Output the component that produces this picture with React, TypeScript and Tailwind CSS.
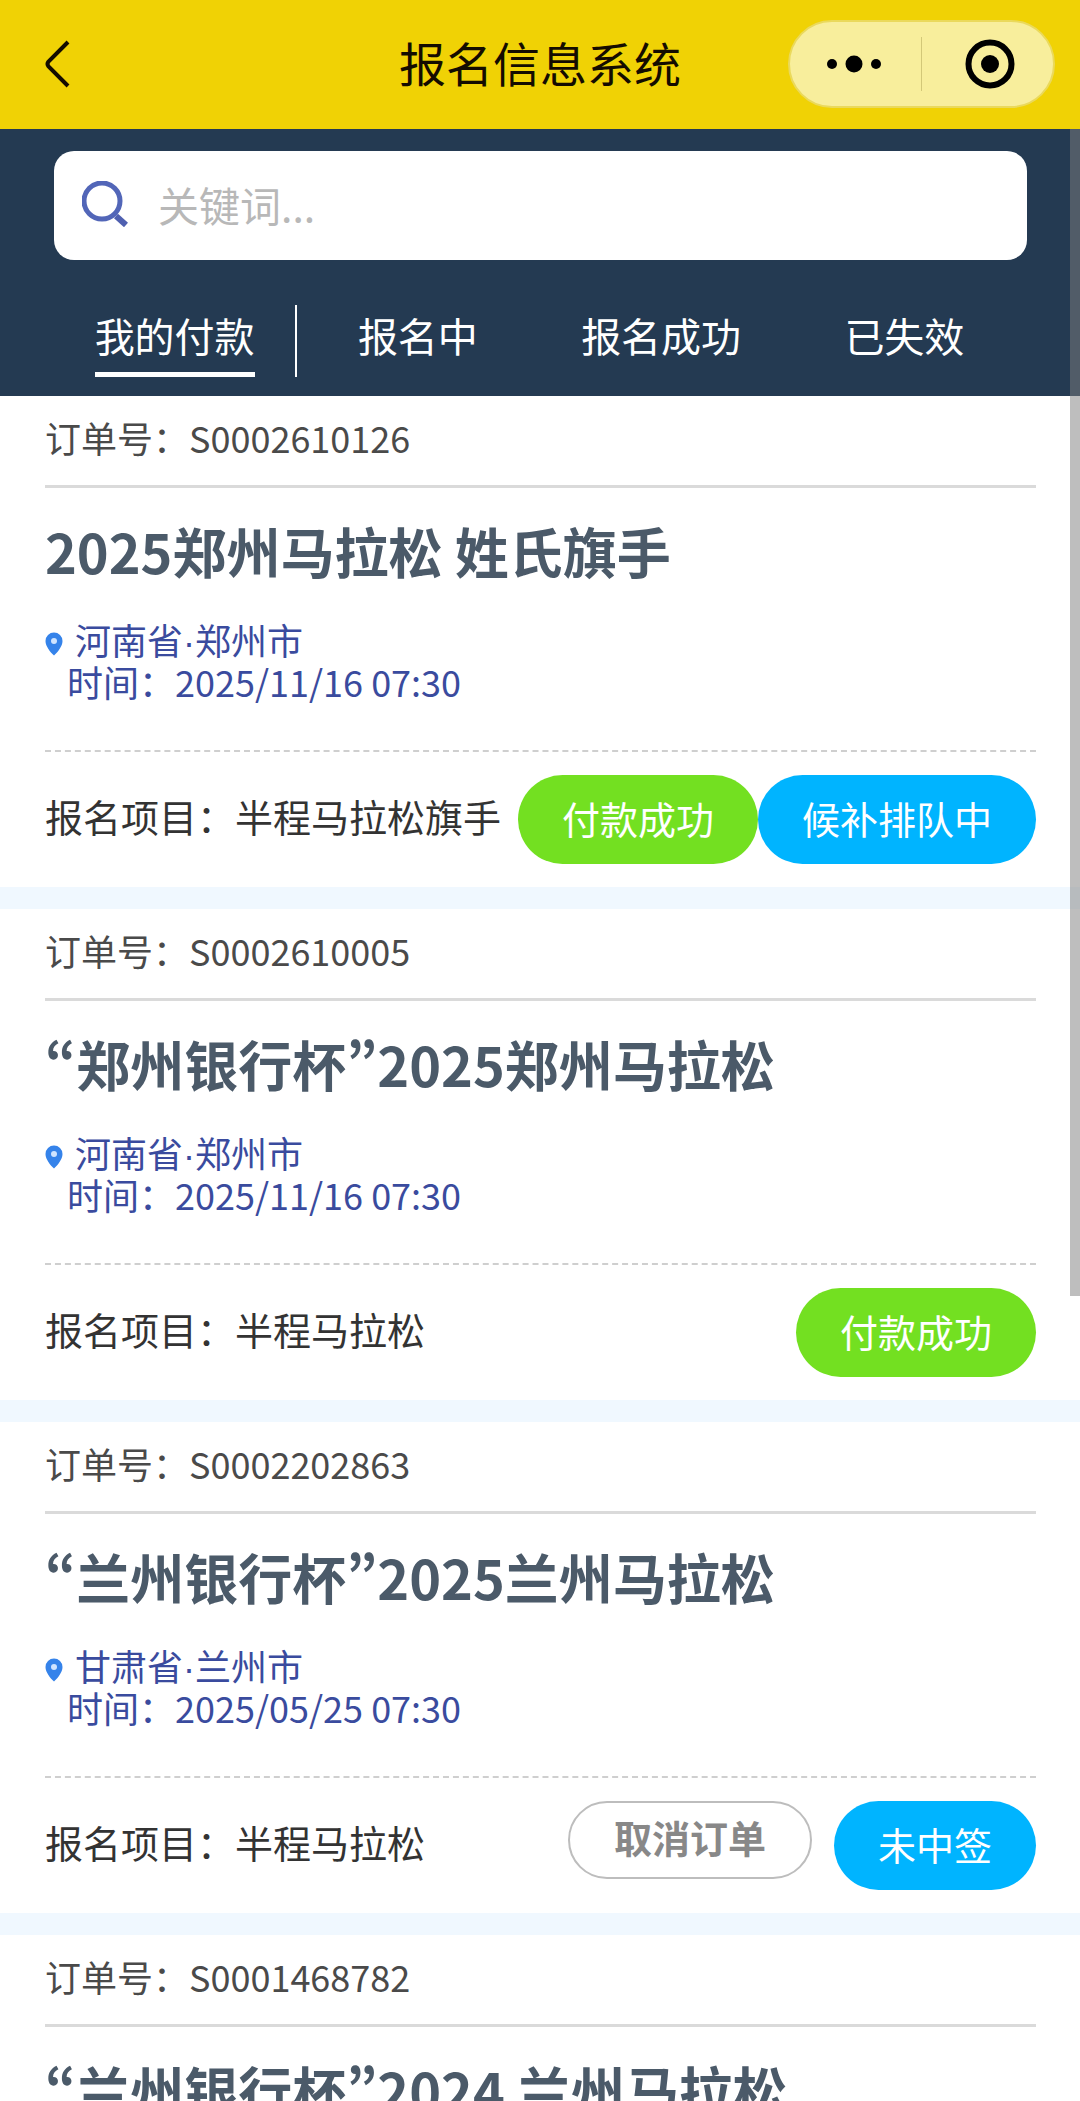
import { useState } from "react";

type Action = {
  label: string;
  kind: "paid" | "status" | "cancel";
};

type Order = {
  id: string;
  title: string;
  place?: string;
  time?: string;
  item?: string;
  actions?: Action[];
};

const tabs = ["我的付款", "报名中", "报名成功", "已失效"];

const orders: Order[] = [
  {
    id: "S0002610126",
    title: "2025郑州马拉松 姓氏旗手",
    place: "河南省·郑州市",
    time: "2025/11/16 07:30",
    item: "半程马拉松旗手",
    actions: [
      { label: "付款成功", kind: "paid" },
      { label: "候补排队中", kind: "status" },
    ],
  },
  {
    id: "S0002610005",
    title: "“郑州银行杯”2025郑州马拉松",
    place: "河南省·郑州市",
    time: "2025/11/16 07:30",
    item: "半程马拉松",
    actions: [{ label: "付款成功", kind: "paid" }],
  },
  {
    id: "S0002202863",
    title: "“兰州银行杯”2025兰州马拉松",
    place: "甘肃省·兰州市",
    time: "2025/05/25 07:30",
    item: "半程马拉松",
    actions: [
      { label: "取消订单", kind: "cancel" },
      { label: "未中签", kind: "status" },
    ],
  },
  {
    id: "S0001468782",
    title: "“兰州银行杯”2024 兰州马拉松",
  },
];

const actionStyles = {
  paid: "h-[89px] pb-1 bg-[#73e021] text-white",
  status: "h-[89px] pb-1 bg-[#00b4ff] text-white",
  cancel:
    "h-[78px] pb-2 mr-[22px] border-2 border-[#bdbdbd] font-bold text-[#888]",
};

function TopBar() {
  return (
    <header className="relative flex h-[129px] shrink-0 items-center justify-between bg-[#f0d205] pr-[25px] pb-[2px] pl-[43px]">
      <button aria-label="返回" className="cursor-pointer">
        <svg width="30" height="50" viewBox="0 0 30 50" fill="none">
          <path
            d="M25 3L5.500 22.500Q3.500 25 5.500 27.500L25 47"
            stroke="#140c00"
            strokeWidth="4"
          />
        </svg>
      </button>
      <h1 className="pointer-events-none absolute inset-x-0 pb-1 text-center text-[47px] leading-[60px] text-[#140c00]">
        报名信息系统
      </h1>
      <div className="flex h-[88px] w-[267px] items-center rounded-full border-2 border-[#ead95c] bg-[#f8ee9c]">
        <button
          aria-label="更多"
          className="flex h-full flex-1 cursor-pointer items-center justify-center pr-1"
        >
          <svg width="56" height="20" viewBox="0 0 56 20">
            <circle cx="6" cy="10" r="5" />
            <circle cx="28" cy="10" r="8.500" />
            <circle cx="50" cy="10" r="5" />
          </svg>
        </button>
        <div className="h-[54px] w-px bg-[#d3c878]" />
        <button
          aria-label="关闭"
          className="flex h-full flex-1 cursor-pointer items-center justify-center pl-1"
        >
          <svg width="50" height="50" viewBox="0 0 50 50">
            <circle
              cx="25"
              cy="25"
              r="21.500"
              fill="none"
              stroke="#000"
              strokeWidth="6"
            />
            <circle cx="25" cy="25" r="9" />
          </svg>
        </button>
      </div>
    </header>
  );
}

function SearchBox() {
  return (
    <label className="flex h-[109px] items-center gap-[30px] rounded-[20px] bg-white px-7 pb-1">
      <svg width="46" height="46" viewBox="0 0 46 46" fill="none">
        <circle cx="20" cy="20" r="18" stroke="#5266b8" strokeWidth="5" />
        <path d="M34 35L44 44" stroke="#4f60b0" strokeWidth="6" />
      </svg>
      <input
        type="text"
        aria-label="关键词"
        placeholder="关键词..."
        className="h-full min-w-0 flex-1 text-[41px] text-[#333] outline-none placeholder:text-[#b8b8b8]"
      />
    </label>
  );
}

function PinIcon() {
  return (
    <svg width="18" height="24" viewBox="0 0 18 24">
      <path
        d="M9 0.500A8.500 8.500 0 0 0 0.500 9C0.500 14 5 20 9 23.500C13 20 17.500 14 17.500 9A8.500 8.500 0 0 0 9 0.500Z"
        fill="#3583ea"
      />
      <circle cx="9" cy="9" r="3" fill="#cfe4ff" />
    </svg>
  );
}

function OrderCard({ order }: { order: Order }) {
  return (
    <article className="bg-white pr-[44px] pl-[45px]">
      <p className="h-[92px] border-b-3 border-[#dadada] text-[36px] leading-[82px] text-[#4a4a4a]">
        订单号：{order.id}
      </p>
      <h2 className="pt-7 text-[54px] leading-[70px] font-bold whitespace-nowrap text-[#4b5a69]">
        {order.title}
      </h2>
      {order.place && (
        <div className="h-[164px] pt-8 text-[36px] leading-[42px] text-[#3a4b9e]">
          <div className="flex h-[42px] items-end gap-3">
            <div className="pb-1">
              <PinIcon />
            </div>
            <p className="font-['Liberation_Sans','Noto_Sans_CJK_SC',sans-serif] leading-[34px]">
              {order.place}
            </p>
          </div>
          <p className="pl-[22px]">时间：{order.time}</p>
        </div>
      )}
      {order.actions && (
        <div className="flex h-[137px] items-start justify-between border-t-2 border-dashed border-[#cfcfcf] pt-[23px] text-[38px] whitespace-nowrap">
          <p className="leading-[82px] text-[#333]">报名项目：{order.item}</p>
          <div className="flex items-start">
            {order.actions.map((action) => (
              <button
                key={action.label}
                className={`cursor-pointer rounded-full px-[44px] ${actionStyles[action.kind]}`}
              >
                {action.label}
              </button>
            ))}
          </div>
        </div>
      )}
    </article>
  );
}

export default function App() {
  const [activeTab, setActiveTab] = useState(0);

  return (
    <div className="flex h-screen flex-col overflow-hidden bg-white font-['Noto_Sans_CJK_SC',sans-serif] [font-feature-settings:'pwid']">
      <TopBar />
      <div className="relative min-h-0 flex-1">
        <main className="h-full overflow-y-auto [scrollbar-width:none]">
          <div className="bg-[#243a52] pt-[22px] pr-[53px] pb-[19px] pl-[54px]">
            <SearchBox />
            <nav className="mt-[45px] grid grid-cols-4">
              {tabs.map((tab, i) => (
                <div
                  key={tab}
                  className={`flex h-[72px] justify-center border-r-2 ${i === 0 ? "border-white" : "border-transparent"}`}
                >
                  <button
                    onClick={() => setActiveTab(i)}
                    className={`cursor-pointer border-b-5 pb-2 text-[40px] leading-[52px] text-white ${i === activeTab ? "border-white" : "border-transparent"}`}
                  >
                    {tab}
                  </button>
                </div>
              ))}
            </nav>
          </div>
          <div className="flex flex-col gap-[22px] bg-[#f0f8ff]">
            {orders.map((order) => (
              <OrderCard key={order.id} order={order} />
            ))}
          </div>
        </main>
        {/* scroll thumb */}
        <div className="absolute top-0 right-0 h-[59.2%] w-[10px] bg-[#7d7d7d]/50" />
      </div>
    </div>
  );
}
